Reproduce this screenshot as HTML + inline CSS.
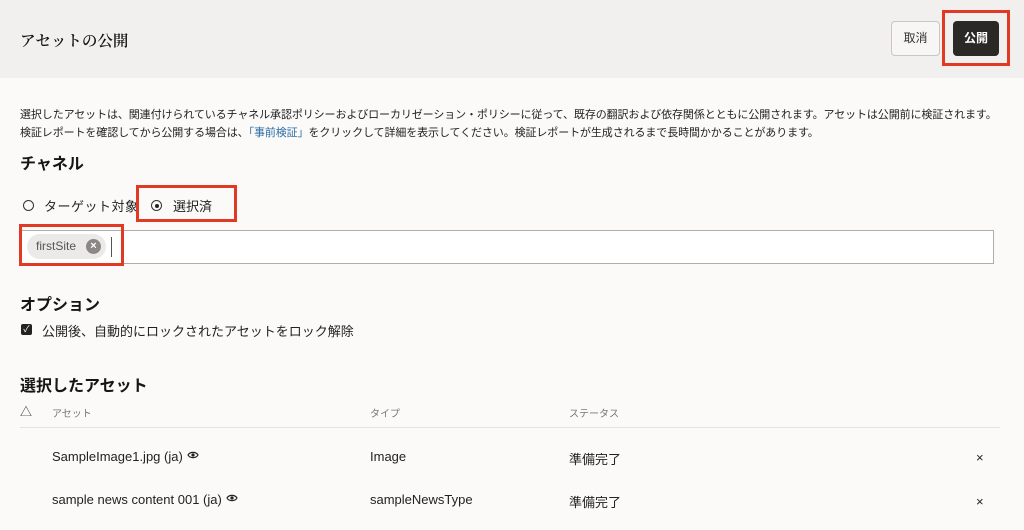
<!DOCTYPE html>
<html><head><meta charset="utf-8"><style>
*{box-sizing:border-box;margin:0;padding:0}
body{width:1024px;height:530px;overflow:hidden;background:#fbfaf9;font-family:"Liberation Sans","Noto Sans CJK JP",sans-serif;color:#161513;position:relative}
.a{position:absolute;white-space:nowrap}
.hdr{position:absolute;left:0;top:0;width:1024px;height:78px;background:#f1f0ef}
.red{position:absolute;border:3px solid #e03a24}
.eye{display:inline-block;vertical-align:1px;margin-left:4px}
</style></head><body>
<div class="hdr"></div>
<div class="a" style="left:20px;top:29px;font-size:15.5px;font-family:'Noto Serif CJK SC','Noto Sans CJK JP',serif;font-weight:600">アセットの公開</div>
<div class="a" style="left:891px;top:21px;width:49px;height:35px;border:1px solid #c9c6c3;border-radius:4px;background:#f7f6f5;font-size:12px;text-align:center;line-height:33px;color:#333">取消</div>
<div class="a" style="left:953px;top:21px;width:46px;height:35px;border-radius:4px;background:#2b2926;font-size:12px;color:#fff;text-align:center;line-height:35px;font-weight:bold">公開</div>
<div class="red" style="left:942px;top:10px;width:68px;height:56px"></div>
<div class="a" style="left:20px;top:106px;font-size:11px;line-height:18px;color:#222;letter-spacing:-0.1px">選択したアセットは、関連付けられているチャネル承認ポリシーおよびローカリゼーション・ポリシーに従って、既存の翻訳および依存関係とともに公開されます。アセットは公開前に検証されます。<br>検証レポートを確認してから公開する場合は、<span style="color:#2b6ca3">「事前検証」</span>をクリックして詳細を表示してください。検証レポートが生成されるまで長時間かかることがあります。</div>
<div class="a" style="left:20px;top:150px;font-size:16px;font-weight:bold">チャネル</div>
<div class="a" style="left:23px;top:200px;width:11px;height:11px;border:1.5px solid #333;border-radius:50%"></div>
<div class="a" style="left:44px;top:196px;font-size:13px;color:#222;letter-spacing:0.5px">ターゲット対象</div>
<div class="a" style="left:151px;top:200px;width:11px;height:11px;border:1.5px solid #333;border-radius:50%"></div>
<div class="a" style="left:154.5px;top:203.5px;width:4px;height:4px;background:#222;border-radius:50%"></div>
<div class="a" style="left:173px;top:196px;font-size:13px;color:#222">選択済</div>
<div class="red" style="left:136px;top:185px;width:101px;height:37px"></div>
<div class="a" style="left:20px;top:230px;width:974px;height:34px;border:1px solid #b0ada9;background:#fff"></div>
<div class="a" style="left:27px;top:234px;width:79px;height:25px;border-radius:13px;background:#eceae8"></div>
<div class="a" style="left:36px;top:239px;font-size:12px;color:#555">firstSite</div>
<div class="a" style="left:86px;top:239px;width:15px;height:15px;border-radius:50%;background:#8a8784;color:#fff;font-size:11px;text-align:center;line-height:15px;font-weight:bold">×</div>
<div class="a" style="left:111px;top:237px;width:1px;height:20px;background:#555"></div>
<div class="red" style="left:19px;top:224px;width:105px;height:42px"></div>
<div class="a" style="left:20px;top:291px;font-size:16px;font-weight:bold">オプション</div>
<div class="a" style="left:21px;top:324px;width:11px;height:11px;background:#222;border-radius:2px;color:#fff;font-size:9px;line-height:11px;text-align:center">✓</div>
<div class="a" style="left:42px;top:321px;font-size:13px;color:#222">公開後、自動的にロックされたアセットをロック解除</div>
<div class="a" style="left:20px;top:372px;font-size:16px;font-weight:bold">選択したアセット</div>
<div class="a" style="left:20px;top:403px;font-size:12px;color:#333">△</div>
<div class="a" style="left:52px;top:405px;font-size:10px;color:#777">アセット</div>
<div class="a" style="left:370px;top:405px;font-size:10px;color:#777">タイプ</div>
<div class="a" style="left:569px;top:405px;font-size:10px;color:#777">ステータス</div>
<div class="a" style="left:20px;top:427px;width:980px;height:1px;background:#e4e2e0"></div>
<div class="a" style="left:52px;top:449px;font-size:13px;color:#222">SampleImage1.jpg (ja)<svg class="eye" width="12" height="10" viewBox="0 0 12 10"><path d="M1 5C3 1.5 9 1.5 11 5C9 8.5 3 8.5 1 5Z" fill="none" stroke="#222" stroke-width="1.2"/><circle cx="6" cy="5" r="1.6" fill="#222"/></svg></div>
<div class="a" style="left:370px;top:449px;font-size:13px;color:#222">Image</div>
<div class="a" style="left:569px;top:449px;font-size:13px;color:#222">準備完了</div>
<div class="a" style="left:976px;top:450px;font-size:13px;color:#222">×</div>
<div class="a" style="left:52px;top:492px;font-size:13px;color:#222">sample news content 001 (ja)<svg class="eye" width="12" height="10" viewBox="0 0 12 10"><path d="M1 5C3 1.5 9 1.5 11 5C9 8.5 3 8.5 1 5Z" fill="none" stroke="#222" stroke-width="1.2"/><circle cx="6" cy="5" r="1.6" fill="#222"/></svg></div>
<div class="a" style="left:370px;top:492px;font-size:13px;color:#222">sampleNewsType</div>
<div class="a" style="left:569px;top:492px;font-size:13px;color:#222">準備完了</div>
<div class="a" style="left:976px;top:494px;font-size:13px;color:#222">×</div>
</body></html>
